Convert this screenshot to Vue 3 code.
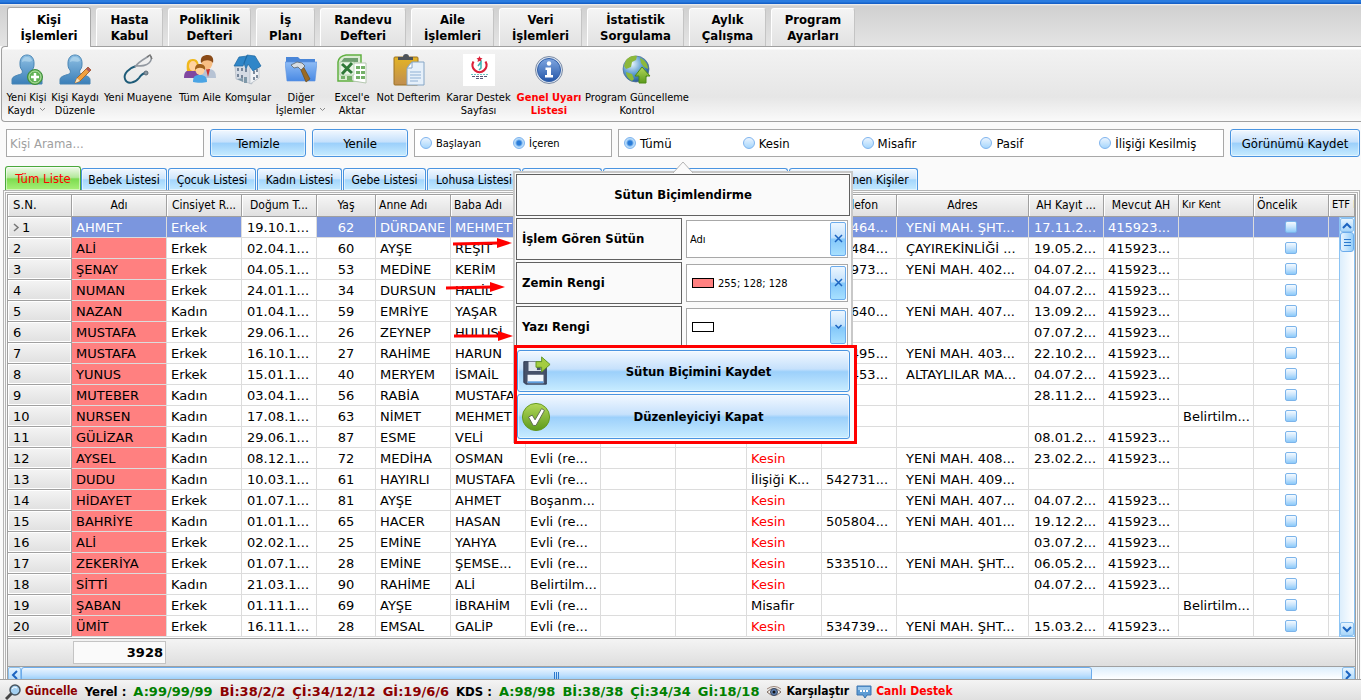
<script setup>
import { ref } from 'vue'

const mainTabs = [
  { lines: ['Kişi', 'İşlemleri'], w: 84 },
  { lines: ['Hasta', 'Kabul'], w: 67 },
  { lines: ['Poliklinik', 'Defteri'], w: 83 },
  { lines: ['İş', 'Planı'], w: 59 },
  { lines: ['Randevu', 'Defteri'], w: 86 },
  { lines: ['Aile', 'İşlemleri'], w: 83 },
  { lines: ['Veri', 'İşlemleri'], w: 83 },
  { lines: ['İstatistik', 'Sorgulama'], w: 97 },
  { lines: ['Aylık', 'Çalışma'], w: 77 },
  { lines: ['Program', 'Ayarları'], w: 84 },
]

const tools = [
  { icon: 'add', lines: ['Yeni Kişi', 'Kaydı'], w: 45, drop: true },
  { icon: 'edit', lines: ['Kişi Kaydı', 'Düzenle'], w: 52 },
  { icon: 'steth', lines: ['Yeni Muayene'], w: 74 },
  { icon: 'family', lines: ['Tüm Aile'], w: 50 },
  { icon: 'house', lines: ['Komşular'], w: 46 },
  { icon: 'folder', lines: ['Diğer', 'İşlemler'], w: 60, drop: true },
  { icon: 'excel', lines: ["Excel'e", 'Aktar'], w: 42 },
  { icon: 'note', lines: ['Not Defterim'], w: 71 },
  { icon: 'health', lines: ['Karar Destek', 'Sayfası'], w: 69 },
  { icon: 'info', lines: ['Genel Uyarı', 'Listesi'], w: 72, hot: true },
  { icon: 'globe', lines: ['Program Güncelleme', 'Kontrol'], w: 104 },
]

const matchMode = ref('İçeren')
const status = ref('Tümü')
const columnName = ref('Adı')
const backColor = ref('255; 128; 128')

const listTabs = [
  { t: 'Tüm Liste', w: 76 },
  { t: 'Bebek Listesi', w: 86 },
  { t: 'Çocuk Listesi', w: 88 },
  { t: 'Kadın Listesi', w: 85 },
  { t: 'Gebe Listesi', w: 83 },
  { t: 'Lohusa Listesi', w: 94 },
  { t: '', w: 80 },
  { t: '', w: 185 },
  { t: 'Görüntülenen Kişiler', w: 129 },
]

const columns = [
  { t: 'S.N.', w: 64, left: true, number: true },
  { t: 'Adı', w: 95 },
  { t: 'Cinsiyet R...', w: 75 },
  { t: 'Doğum T...', w: 75 },
  { t: 'Yaş', w: 59 },
  { t: 'Anne Adı', w: 75, left: true },
  { t: 'Baba Adı', w: 75, left: true },
  { t: '', w: 75 },
  { t: '', w: 75 },
  { t: '', w: 71 },
  { t: '', w: 75 },
  { t: 'Telefon', w: 75 },
  { t: 'Adres', w: 132 },
  { t: 'AH Kayıt ...', w: 75 },
  { t: 'Mevcut AH', w: 75 },
  { t: 'Kır Kent', w: 75, left: true, small: true },
  { t: 'Öncelik', w: 75, left: true },
  { t: 'ETF I', w: 0, left: true, small: true },
]

const M = '415923...'
const B = 'Belirtilm...'
const people = [
  ['AHMET', 'Erkek', '19.10.1...', 62, 'DÜRDANE', 'MEHMET', '', '', '542464...', 'YENİ MAH. ŞHT...', '17.11.2...', M, ''],
  ['ALİ', 'Erkek', '02.04.1...', 60, 'AYŞE', 'REŞİT', '', '', '542484...', 'ÇAYIREKİNLİĞİ ...', '19.05.2...', M, ''],
  ['ŞENAY', 'Erkek', '04.05.1...', 53, 'MEDİNE', 'KERİM', '', '', '542973...', 'YENİ MAH. 402...', '04.07.2...', M, ''],
  ['NUMAN', 'Erkek', '24.01.1...', 34, 'DURSUN', 'HALİL', '', '', '', '', '04.07.2...', M, ''],
  ['NAZAN', 'Kadın', '01.04.1...', 59, 'EMRİYE', 'YAŞAR', '', '', '542640...', 'YENİ MAH. 407...', '13.09.2...', M, ''],
  ['MUSTAFA', 'Erkek', '29.06.1...', 26, 'ZEYNEP', 'HULUSİ', '', '', '', '', '07.07.2...', M, ''],
  ['MUSTAFA', 'Erkek', '16.10.1...', 27, 'RAHİME', 'HARUN', '', '', '542495...', 'YENİ MAH. 403...', '22.10.2...', M, ''],
  ['YUNUS', 'Erkek', '15.01.1...', 40, 'MERYEM', 'İSMAİL', '', '', '542453...', 'ALTAYLILAR MA...', '04.07.2...', M, ''],
  ['MUTEBER', 'Kadın', '03.04.1...', 56, 'RABİA', 'MUSTAFA', '', '', '', '', '28.11.2...', M, ''],
  ['NURSEN', 'Kadın', '17.08.1...', 63, 'NİMET', 'MEHMET', '', '', '', '', '', '', B],
  ['GÜLİZAR', 'Kadın', '29.06.1...', 87, 'ESME', 'VELİ', '', '', '', '', '08.01.2...', M, ''],
  ['AYSEL', 'Kadın', '08.12.1...', 72, 'MEDİHA', 'OSMAN', 'Evli (re...', 'Kesin', '', 'YENİ MAH. 408...', '23.02.2...', M, ''],
  ['DUDU', 'Kadın', '10.03.1...', 61, 'HAYIRLI', 'MUSTAFA', 'Evli (re...', 'İlişiği K...', '542731...', 'YENİ MAH. 409...', '', '', ''],
  ['HİDAYET', 'Erkek', '01.07.1...', 81, 'AYŞE', 'AHMET', 'Boşanm...', 'Kesin', '', 'YENİ MAH. 407...', '04.07.2...', M, ''],
  ['BAHRİYE', 'Kadın', '01.01.1...', 65, 'HACER', 'HASAN', 'Evli (re...', 'Kesin', '505804...', 'YENİ MAH. 401...', '19.12.2...', M, ''],
  ['ALİ', 'Erkek', '02.02.1...', 25, 'EMİNE', 'YAHYA', 'Evli (re...', 'Kesin', '', '', '03.07.2...', M, ''],
  ['ZEKERİYA', 'Erkek', '01.07.1...', 28, 'EMİNE', 'ŞEMSE...', 'Evli (re...', 'Kesin', '533510...', 'YENİ MAH. ŞHT...', '06.05.2...', M, ''],
  ['SİTTİ', 'Kadın', '21.03.1...', 90, 'RAHİME', 'ALİ', 'Belirtilm...', 'Kesin', '', '', '04.07.2...', M, ''],
  ['ŞABAN', 'Erkek', '01.11.1...', 69, 'AYŞE', 'İBRAHİM', 'Evli (re...', 'Misafir', '', '', '', '', B],
  ['ÜMİT', 'Erkek', '16.11.1...', 28, 'EMSAL', 'GALİP', 'Evli (re...', 'Kesin', '534739...', 'YENİ MAH. ŞHT...', '15.03.2...', M, ''],
]
</script>

<template>
  <div class="app">
    <div class="titlebar"></div>
    <nav class="main-tabs">
      <button v-for="(tab, i) in mainTabs" :key="i" :class="{ active: i === 0 }" :style="{ width: tab.w + 'px' }">
        <span v-for="l in tab.lines" :key="l">{{ l }}</span>
      </button>
    </nav>

    <div class="ribbon">
      <button v-for="tool in tools" :key="tool.icon" class="tool" :class="{ hot: tool.hot }" :style="{ width: tool.w + 'px' }">
        <svg class="tool-icon" viewBox="0 0 32 32" aria-hidden="true">
          <defs v-if="tool.icon === 'add'">
            <linearGradient id="person" x1="0" y1="0" x2="0" y2="1"><stop offset="0" stop-color="#8fc0e4" /><stop offset="1" stop-color="#3b7fb8" /></linearGradient>
            <linearGradient id="fold" x1="0" y1="0" x2="0" y2="1"><stop offset="0" stop-color="#8fbcf5" /><stop offset="1" stop-color="#4a8ae4" /></linearGradient>
            <radialGradient id="globe" cx=".35" cy=".3" r=".8"><stop offset="0" stop-color="#e6f4fc" /><stop offset=".5" stop-color="#5b9bd0" /><stop offset="1" stop-color="#1c4c86" /></radialGradient>
            <linearGradient id="info" x1="0" y1="0" x2="0" y2="1"><stop offset="0" stop-color="#7fa6e0" /><stop offset="1" stop-color="#2456a8" /></linearGradient>
            <linearGradient id="green" x1="0" y1="0" x2="0" y2="1"><stop offset="0" stop-color="#b4d85a" /><stop offset="1" stop-color="#5c9a1c" /></linearGradient>
            <linearGradient id="board" x1="0" y1="0" x2="0" y2="1"><stop offset="0" stop-color="#e4b424" /><stop offset="1" stop-color="#c08e50" /></linearGradient>
          </defs>
          <g v-if="tool.icon === 'add' || tool.icon === 'edit'">
            <path d="M1 30v-4c0-3 3-4 6-5 4-1 5-2 4-5-2-2-2-4-2-7 0-5 3-8 7-8s7 3 7 8c0 3 0 5-2 7-1 3 0 4 4 5 3 1 6 2 6 5v4z" fill="url(#person)" stroke="#4784b4" />
            <path d="M11 8c0-3 2-5 5-5s5 2 5 4c-3 2-7-1-10 1z" fill="#b4d8ee" opacity=".7" />
            <g v-if="tool.icon === 'add'">
              <circle cx="24" cy="23" r="7.5" fill="#62b256" stroke="#3d8c3b" />
              <circle cx="24" cy="23" r="6" fill="none" stroke="#b5e0a5" />
              <path d="M24 19v8M20 23h8" stroke="#fff" stroke-width="2.5" />
            </g>
            <g v-else>
              <path d="M18 24 29 13l3 3-11 11-5 2z" fill="#f0a040" stroke="#a86a2c" />
              <path d="m27 15 2-2 3 3-2 2z" fill="#b05a5a" />
              <path d="m18 24 3 3-5 2z" fill="#f6e2bc" />
            </g>
          </g>
          <g v-else-if="tool.icon === 'steth'" fill="none">
            <path d="M14 12C7 14 1 20 3 25c2 6 10 4 14-1 2-3 4-5 7-5" stroke="#1d5b78" stroke-width="2" />
            <path d="M13 13C16 8 22 5 27 2M14 12c6 0 10 0 13-3 2-2 3-4 2-7" stroke="#9298a0" stroke-width="1.6" />
            <path d="M25 3l3-2 2 4" stroke="#777" stroke-width="1.4" />
            <circle cx="24" cy="19" r="2" fill="#8796a2" stroke="#5c6c78" />
          </g>
          <g v-else-if="tool.icon === 'family'">
            <path d="M0 24c0-6 2-8 8-8s8 3 8 8z" fill="#8048a0" />
            <path d="M3 17c-1-8 0-12 6-12s6 6 6 12z" fill="#f0b81c" />
            <ellipse cx="9" cy="12" rx="4" ry="5" fill="#ffd2a0" />
            <path d="M15 24c0-7 3-9 9-9s8 3 8 9z" fill="#b7c3d4" />
            <path d="M22 15h4l-2 8z" fill="#c83434" />
            <ellipse cx="23" cy="9" rx="5.5" ry="6.5" fill="#f7be84" />
            <path d="M17 9c-1-6 2-8 7-8 4 0 6 3 5 8-2-3-8-4-12 0z" fill="#8a4b18" />
            <path d="M9 28c0-6 2-7 7-7s7 2 7 7c-3 1-11 1-14 0z" fill="#4aa4e4" />
            <ellipse cx="16" cy="16" rx="4.5" ry="5" fill="#ffd2a0" />
            <path d="M11 16c0-5 2-6 5-6s6 2 5 6c-3-3-7-3-10 0z" fill="#a0601c" />
          </g>
          <g v-else-if="tool.icon === 'house'">
            <path d="M3 12l8-5 9 3v20L4 25z" fill="#d5dbe4" stroke="#a9b1bc" stroke-width=".6" />
            <path d="M18 13l9 0v11l-9 6z" fill="#f0f2f5" stroke="#a9b1bc" stroke-width=".6" />
            <path d="M2 12 7 3l8-1-4 10zM12 9l3-8 8 1 6 10-8 5-5-7-2 5z" fill="#2f86c8" stroke="#1b659f" stroke-width=".7" />
            <path d="M6 14v3M10 14v3M6 20v3M10 21v3M14 15v3M22 17v3M25 15v3M22 23v3M25 21v3" stroke="#566a80" stroke-width="1.5" />
            <path d="M5 25l6-1v4zM12 23h3v6h-3z" fill="#7f98a8" />
          </g>
          <g v-else-if="tool.icon === 'folder'">
            <path d="M1 3h12l2 2h15v6H1z" fill="#4a86d8" />
            <path d="M0 8h32l-2 19H2z" fill="url(#fold)" stroke="#5a92e0" stroke-width=".6" />
            <path d="m15 14 3-2 7 13-4 3z" fill="#9a6a24" stroke="#64430f" stroke-width=".6" />
            <path d="M6 11l6-3 5 1 3 3-4 4-3-3-4 1z" fill="#d8dde2" stroke="#59636c" stroke-width=".8" />
          </g>
          <g v-else-if="tool.icon === 'excel'">
            <path d="M2 8Q3 2 10 1h15v26H2z" fill="#dcecd4" stroke="#60b040" stroke-width="1.5" />
            <path d="M8 4h14v4H5z" fill="#6f9f70" />
            <path d="M17 9h13v20l-13-2z" fill="#fff" stroke="#b5c8b0" />
            <path d="M20 12h4v3h-4zM25 12h4v3h-4zM20 17h4v3h-4zM25 17h4v3h-4zM20 22h4v3h-4zM25 22h4v3h-4zM5 22h4v3H5zM11 22h5v4h-5z" fill="#74b068" />
            <path d="M4 8h14v13H4z" fill="#eaf5e6" stroke="#9cc494" stroke-width=".6" />
            <path d="m6 10 10 9M16 9 6 20" stroke="#307a38" stroke-width="3" />
          </g>
          <g v-else-if="tool.icon === 'note'">
            <rect x="1" y="3" width="24" height="28" rx="1" fill="url(#board)" stroke="#9c7222" />
            <path d="M5 5V3h5q0-3 3-3t3 3h4v3H5z" fill="#4c5258" />
            <path d="M14 14 19 8h12v23H14z" fill="#e6f0fa" stroke="#86a6c6" />
            <path d="M19 8v6h-5z" fill="#fff" stroke="#86a6c6" />
            <path d="M17 18h11M17 21h11M17 24h11M17 27h8" stroke="#8fb0d4" />
          </g>
          <g v-else-if="tool.icon === 'health'">
            <path d="M0 0h32v32H0z" fill="#fff" />
            <path d="M11 7a7.5 7.5 0 1 0 11 0c4 8-15 8-11 0z" fill="none" stroke="none" />
            <path d="M10.500 7.500a7 7 0 1 0 12 0" fill="none" stroke="#dc2038" stroke-width="2.200" />
            <path d="m16.500 2 1 2 2 .3-1.500 1.500.4 2.200-1.900-1-2 1 .5-2.200L13.500 4.300l2-.3z" fill="#dc2038" />
            <path d="M15 12l3-4v6l-2 2" stroke="#3cb4b4" stroke-width="1.500" fill="none" />
            <path d="M8 20.500h17" stroke="#70c4c4" stroke-dasharray="2 1" />
            <path d="M9 22.500h15M13 24.500h7" stroke="#585878" stroke-dasharray="3 1" />
          </g>
          <g v-else-if="tool.icon === 'info'">
            <circle cx="16" cy="16" r="13.500" fill="#dce5f2" stroke="#7b8ba4" />
            <circle cx="16" cy="16" r="11.500" fill="url(#info)" stroke="#315fa8" />
            <circle cx="16" cy="9.500" r="2.200" fill="#fff" />
            <path d="M12.500 13.500h5.500v7.500h2v2.500h-8V21h2v-5h-1.500z" fill="#fff" />
          </g>
          <g v-else>
            <circle cx="15" cy="15" r="13" fill="url(#globe)" stroke="#4d6f90" stroke-width=".7" />
            <path d="M5 6c3-4 8-5 11-4l-1 4-4 2-1 5-5 2-2-3zM19 4c5 2 8 6 8 11l-4-2-3-4zM5 18l6 2 2 5-2 2c-4-2-6-5-6-9z" fill="#8cb83c" />
            <path d="m21 13 8 9h-4v7h-7v-7h-4z" fill="url(#green)" stroke="#4e8c14" />
          </g>
        </svg>
        <span v-for="(l, i) in tool.lines" :key="l">{{ l }}<svg v-if="tool.drop && i === 1" class="mini" viewBox="0 0 7 5" aria-hidden="true"><path d="M1 1l2.500 2.500L6 1" fill="none" stroke="#888" /></svg></span>
      </button>
    </div>

    <div class="filters">
      <input class="search" type="text" placeholder="Kişi Arama..." aria-label="Kişi Arama" />
      <button class="blue clear">Temizle</button>
      <button class="blue clear">Yenile</button>
      <div class="radios two">
        <label v-for="o in ['Başlayan', 'İçeren']" :key="o"><input v-model="matchMode" type="radio" name="match" :value="o" />{{ o }}</label>
      </div>
      <div class="radios five">
        <label v-for="o in ['Tümü', 'Kesin', 'Misafir', 'Pasif', 'İlişiği Kesilmiş']" :key="o"><input v-model="status" type="radio" name="status" :value="o" />{{ o }}</label>
      </div>
      <button class="blue save-view">Görünümü Kaydet</button>
    </div>

    <nav class="list-tabs">
      <button v-for="(tab, i) in listTabs" :key="i" :class="{ active: i === 0 }" :style="{ width: tab.w + 'px' }">{{ tab.t }}</button>
    </nav>

    <main class="panel">
      <div class="grid">
        <div class="rows">
          <table>
            <colgroup>
              <col v-for="(c, i) in columns" :key="i" :style="c.w ? { width: c.w + 'px' } : {}" />
            </colgroup>
            <thead>
              <tr>
                <th v-for="(c, i) in columns" :key="i" :class="{ left: c.left, small: c.small, number: c.number }">{{ c.t }}</th>
              </tr>
            </thead>
            <tbody>
              <tr v-for="(p, i) in people" :key="i" :class="{ selected: i === 0 }">
                <td class="sn"><svg v-if="i === 0" class="pointer" viewBox="0 0 7 9" aria-hidden="true"><path d="M1 1l4 3.500L1 8" fill="none" stroke="#777" stroke-width="1.500" /></svg>{{ i + 1 }}</td>
                <td class="name">{{ p[0] }}</td>
                <td>{{ p[1] }}</td>
                <td class="birth">{{ p[2] }}</td>
                <td class="age">{{ p[3] }}</td>
                <td>{{ p[4] }}</td>
                <td>{{ p[5] }}</td>
                <td>{{ p[6] }}</td>
                <td></td>
                <td></td>
                <td :class="{ certain: p[7] === 'Kesin' }">{{ p[7] }}</td>
                <td>{{ p[8] }}</td>
                <td class="address">{{ p[9] }}</td>
                <td class="date">{{ p[10] }}</td>
                <td>{{ p[11] }}</td>
                <td>{{ p[12] }}</td>
                <td class="check"><input type="checkbox" :aria-label="'Öncelik ' + (i + 1)" /></td>
                <td></td>
              </tr>
            </tbody>
          </table>
          <div class="vscroll">
            <button aria-label="Yukarı"><svg viewBox="0 0 10 7"><path d="M1 6l4-4 4 4" /></svg></button>
            <div class="vthumb"></div>
            <div class="vtrack"></div>
            <button aria-label="Aşağı"><svg viewBox="0 0 10 7"><path d="M1 1l4 4 4-4" /></svg></button>
          </div>
        </div>
        <div class="summary"><output>3928</output></div>
        <div class="hscroll">
          <button aria-label="Sola"><svg viewBox="0 0 7 10"><path d="M6 1L2 5l4 4" /></svg></button>
          <div class="hthumb"><i></i></div>
          <div class="htrack"></div>
          <button aria-label="Sağa"><svg viewBox="0 0 7 10"><path d="M1 1l4 4-4 4" /></svg></button>
        </div>
      </div>
    </main>

    <footer class="status">
      <svg viewBox="0 0 16 16" aria-hidden="true"><path d="M1 15l6-6" stroke="#444" stroke-width="3" /><circle cx="10" cy="6" r="5" fill="#a4d0f0" stroke="#48545e" stroke-width="1.500" /><path d="M7 5q2-3 5-1" stroke="#fff" fill="none" /></svg>
      <a href="#" class="dark first">Güncelle</a>
      <span class="source">Yerel :</span>
      <span class="ok count">A:99/99/99</span>
      <span class="dark count">Bİ:38/2/2</span>
      <span class="dark count">Çİ:34/12/12</span>
      <span class="dark count">Gİ:19/6/6</span>
      <span class="source">KDS :</span>
      <span class="ok count">A:98/98</span>
      <span class="ok count">Bİ:38/38</span>
      <span class="ok count">Çİ:34/34</span>
      <span class="ok count">Gİ:18/18</span>
      <svg viewBox="0 0 16 16" aria-hidden="true"><path d="M1 8q7-7 14 0-7 7-14 0z" fill="#f5efe8" stroke="#7c6a60" /><circle cx="8" cy="8" r="3.500" fill="#6080b0" stroke="#3a4860" /><circle cx="8" cy="8" r="1.500" fill="#111" /><path d="M1 5q7-5 14 0" fill="none" stroke="#9a8478" /></svg>
      <a href="#" class="first">Karşılaştır</a>
      <svg viewBox="0 0 16 16" aria-hidden="true"><path d="M1 2h14v9h-4l-2 3-2-3H1z" fill="#5e9cd4" stroke="#3a74b0" /><path d="M2 3h12v3H2z" fill="#9cc8ec" /><path d="M4 7h2M7 7h2M10 7h2" stroke="#fff" stroke-width="2" /></svg>
      <a href="#" class="live first">Canlı Destek</a>
    </footer>

    <section class="popup">
      <svg class="tip" viewBox="0 0 20 12" aria-hidden="true"><path d="M0 12L10 1l10 11z" fill="#fafafa" /><path d="M0 12L10 1l10 11" fill="none" stroke="#b4b4b4" /></svg>
      <h2>Sütun Biçimlendirme</h2>
      <div class="field">
        <label for="col">İşlem Gören Sütün</label>
        <div class="editor">
          <input id="col" v-model="columnName" type="text" />
          <button aria-label="Sütunu temizle"><svg viewBox="0 0 9 9"><path d="M1 1l7 7M8 1L1 8" /></svg></button>
        </div>
      </div>
      <div class="field">
        <label for="back">Zemin Rengi</label>
        <div class="editor">
          <i class="swatch pink"></i>
          <input id="back" v-model="backColor" type="text" />
          <button aria-label="Zemin rengini temizle"><svg viewBox="0 0 9 9"><path d="M1 1l7 7M8 1L1 8" /></svg></button>
        </div>
      </div>
      <div class="field">
        <label for="fore">Yazı Rengi</label>
        <div class="editor">
          <i class="swatch"></i>
          <input id="fore" type="text" />
          <button class="drop" aria-label="Yazı rengi seç"><svg viewBox="0 0 9 9"><path d="M1.500 3l3 3 3-3" stroke-width="2" /></svg></button>
        </div>
      </div>
      <div class="actions">
        <button class="blue">
          <svg viewBox="0 0 32 32" aria-hidden="true">
            <path d="M3 6h24v24H5l-2-2z" fill="#46526a" stroke="#2c3650" />
            <path d="M8 6h14v10H8z" fill="#dce4ee" /><path d="M17 7h4v8h-4z" fill="#46526a" />
            <path d="M7 20h17v9H7z" fill="#f4f8fc" /><path d="M7 27h17v2H7z" fill="#5c9cdc" />
            <path d="M16 6h6V1l9 8-9 8v-5h-6z" fill="#a4cc40" stroke="#5e9420" />
          </svg>
          <span>Sütun Biçimini Kaydet</span>
        </button>
        <button class="blue tall">
          <svg viewBox="0 0 32 32" aria-hidden="true">
            <circle cx="16" cy="16" r="14.500" fill="url(#green)" stroke="#62961c" />
            <path d="M8 16l4-2 3 5 7-12 3 2-9 16h-3z" fill="#fff" stroke="#5c6a50" />
          </svg>
          <span>Düzenleyiciyi Kapat</span>
        </button>
      </div>
      <svg class="arrow a1" viewBox="0 0 60 12" aria-hidden="true"><path d="M1 7l46-1" stroke="#f00" stroke-width="3" /><path d="M45 1l15 5-15 5z" fill="#f00" /></svg>
      <svg class="arrow a2" viewBox="0 0 60 12" aria-hidden="true"><path d="M1 7l46-1" stroke="#f00" stroke-width="3" /><path d="M45 1l15 5-15 5z" fill="#f00" /></svg>
      <svg class="arrow a3" viewBox="0 0 60 12" aria-hidden="true"><path d="M1 6h46" stroke="#f00" stroke-width="3" /><path d="M45 1l15 5-15 5z" fill="#f00" /></svg>
    </section>
  </div>
</template>

<style>
body { background: #fafafa; }
</style>

<style scoped>
.app {
  position: relative;
  font-family: "DejaVu Sans Condensed", "DejaVu Sans", sans-serif;
  font-stretch: condensed;
  font-size: 12px;
  color: #000;
  overflow: hidden;
}
.app * { box-sizing: border-box; }
button, input { font: inherit; color: inherit; margin: 0; padding: 0; }
button { border: 0; background: none; white-space: nowrap; }
a { color: inherit; text-decoration: none; }

.titlebar { height: 4px; background: linear-gradient(#2a7ce0, #2a7ce0 2px, #1661c8 3px); }
.main-tabs {
  display: flex;
  align-items: flex-end;
  gap: 5px;
  height: 42px;
  padding: 0 7px;
  background: linear-gradient(#f4f4f4, #d0d0d0 2px, #e4e4e4);
}
.main-tabs button {
  display: flex;
  flex: none;
  flex-direction: column;
  align-items: center;
  height: 38px;
  padding-top: 3px;
  border: 1px solid #c4c4c4;
  border-top-color: #fff;
  border-left-color: #fff;
  border-bottom: 0;
  border-radius: 3px 3px 0 0;
  background: linear-gradient(#f4f4f4, #e2e2e2);
  font-weight: bold;
  font-size: 13px;
  line-height: 16px;
}
.main-tabs button.active {
  position: relative;
  z-index: 1;
  height: 40px;
  margin-bottom: -1px;
  padding-top: 4px;
  border-color: #a8a8a8;
  background: #fff;
}
.ribbon {
  display: flex;
  height: 76px;
  margin-left: 1px;
  padding: 7px 2px 0;
  border: 1px solid #a0a0a0;
  border-right: 0;
  border-radius: 4px 0 0 4px;
  background: linear-gradient(#fff, #fff 2px, #f2f2f2 3px, #e6e6e6 50px, #fafafa);
}
.tool {
  display: flex;
  flex: none;
  flex-direction: column;
  align-items: center;
  font-size: 11px;
  line-height: 13px;
}
.tool-icon { width: 32px; height: 32px; margin-bottom: 5px; }
.tool.hot { color: #f00; font-weight: bold; }
.mini { width: 7px; height: 5px; margin-left: 4px; vertical-align: 2px; }

.blue {
  border: 1px solid #4a94e0;
  border-radius: 3px;
  background: linear-gradient(#f2f8ff, #c6e1fc 45%, #9cd0fb 52%, #c8ecff);
  box-shadow: inset 0 0 0 1px rgba(255, 255, 255, .5);
}
.filters { display: flex; gap: 6px; height: 28px; margin: 7px 1px 9px 6px; font-size: 13px; }
.filters .search { width: 198px; padding: 0 3px; border: 1px solid #a8a8a8; background: #fff; }
.search::placeholder { color: #a0a0a0; opacity: 1; }
.filters .clear { width: 96px; }
.filters .save-view { width: 130px; flex: none; }
.radios { display: grid; align-items: center; padding: 0 5px; border: 1px solid #a8a8a8; background: #fff; }
.radios.two { width: 198px; grid-template-columns: 1fr 1fr; font-size: 11px; }
.radios.five { flex: 1; grid-template-columns: repeat(5, 1fr); }
.radios label { display: flex; align-items: center; gap: 4px; white-space: nowrap; }
.radios input {
  appearance: none;
  width: 12px;
  height: 12px;
  border: 1px solid #7fb4ee;
  border-radius: 50%;
  background: linear-gradient(#eaf4ff, #a6d6fc);
}
.radios input:checked { background: radial-gradient(circle, #2a7cd8 2px, #b8dcfb 4px); }

.list-tabs { display: flex; align-items: flex-end; gap: 1px; height: 24px; padding-left: 5px; }
.list-tabs button {
  flex: none;
  height: 22px;
  padding: 0 5px;
  border: 1px solid #4a94e0;
  border-bottom: 0;
  border-radius: 3px 3px 0 0;
  background: linear-gradient(#f2f8ff, #cfe6fc 45%, #a4d6fc 52%, #c4eaff);
  box-shadow: inset 0 0 0 1px rgba(255, 255, 255, .5);
}
.list-tabs button.active {
  height: 24px;
  margin-right: -1px;
  border-color: #4aa83c;
  background: linear-gradient(#f0faea, #b4e89c 45%, #7cdc50 52%, #a8f078);
  color: #f00;
  font-size: 13px;
}

.panel { margin: 0 1px 0 3px; padding: 1px 1px 0; border: 3px double #b4b4b4; border-bottom: 0; }
.grid { border: 1px solid #a0a0a0; border-bottom: 0; background: #fff; }
.rows { position: relative; height: 443px; overflow: hidden; }
table {
  width: 100%;
  table-layout: fixed;
  border-collapse: separate;
  border-spacing: 0;
  font-size: 13px;
  font-family: "DejaVu Sans", sans-serif;
  font-stretch: normal;
}
th {
  height: 22px;
  padding: 0 3px 2px;
  border-right: 1px solid #a0a0a0;
  border-bottom: 1px solid #a0a0a0;
  background: linear-gradient(#f6f6f6, #e0e0e0);
  box-shadow: inset 1px 1px 0 #fff;
  font-family: "DejaVu Sans Condensed", "DejaVu Sans", sans-serif;
  font-stretch: condensed;
  font-weight: normal;
  font-size: 12px;
  line-height: 18px;
  white-space: nowrap;
  overflow: hidden;
}
th.left { text-align: left; }
th.small { font-size: 11px; }
th.number { padding-left: 5px; font-size: 13px; }
td {
  height: 21px;
  padding: 2px 0 0 4px;
  border-right: 1px solid #dcdcdc;
  border-bottom: 1px solid #dcdcdc;
  line-height: 18px;
  white-space: nowrap;
  overflow: hidden;
}
td.sn {
  padding-left: 5px;
  border-color: #a0a0a0;
  background: linear-gradient(#f4f4f4, #e0e0e0);
  box-shadow: inset 1px 1px 0 #fff, inset -1px -1px 0 #fff;
}
td.name { background: #ff8080; }
td.age { padding-left: 0; text-align: center; }
td.address { padding-left: 9px; }
td.date, td.birth { padding-left: 5px; }
td.certain { color: #f00; }
td.check { padding: 0; text-align: center; line-height: 0; }
.check input {
  appearance: none;
  width: 12px;
  height: 12px;
  border: 1px solid #7cb4ea;
  border-radius: 2px;
  background: linear-gradient(#f4faff, #c8e4fc 50%, #8ccafa);
}
.selected td:not(.sn):not(.birth) { background: #7b96de; color: #fff; }
.pointer { width: 7px; height: 9px; margin-right: 2px; }

.vscroll {
  position: absolute;
  display: flex;
  flex-direction: column;
  top: 22px;
  right: 0;
  bottom: 1px;
  width: 16px;
  border: 1px solid #8cc4f4;
  background: linear-gradient(90deg, #dceefc, #fff);
}
.vscroll button, .hscroll button {
  display: flex;
  align-items: center;
  justify-content: center;
  border: 1px solid #8cc0ee;
  border-radius: 2px;
  background: linear-gradient(#e6f4ff, #a8d6fa);
}
.vscroll button { height: 14px; }
.vscroll svg { width: 10px; height: 7px; }
.vscroll path, .hscroll path { fill: none; stroke: #1c64c0; stroke-width: 2; }
.vthumb {
  height: 20px;
  border: 1px solid #6cacec;
  border-radius: 3px;
  background: linear-gradient(#2c78cc, #2c78cc) 3px 6px / 7px 1px no-repeat,
    linear-gradient(#2c78cc, #2c78cc) 3px 9px / 7px 1px no-repeat,
    linear-gradient(#2c78cc, #2c78cc) 3px 12px / 7px 1px no-repeat,
    linear-gradient(90deg, #e8f4ff, #94cefa);
}
.vtrack { flex: 1; }
.summary {
  height: 29px;
  padding: 2px 0 3px 65px;
  border-top: 1px solid #a0a0a0;
  border-bottom: 1px solid #a0a0a0;
  background: linear-gradient(#f4f4f4, #dedede);
}
.summary output {
  display: block;
  width: 93px;
  height: 23px;
  padding: 0 2px;
  border: 1px solid #c4c4c4;
  background: #fafafa;
  font-family: "DejaVu Sans", sans-serif;
  font-stretch: normal;
  font-weight: bold;
  font-size: 13px;
  line-height: 21px;
  text-align: right;
}
.hscroll { display: flex; height: 12px; overflow: hidden; background: linear-gradient(#dceefc, #fff); }
.hscroll button { width: 13px; height: 16px; flex: none; }
.hscroll svg { width: 7px; height: 10px; }
.hthumb {
  display: flex;
  flex: 107;
  justify-content: center;
  height: 16px;
  padding-top: 4px;
  border: 1px solid #6cacec;
  border-radius: 3px;
  background: linear-gradient(#eaf5ff, #c0e0fc 50%, #80c4f8);
}
.hthumb i { width: 5px; height: 8px; border: 1px solid #2c78cc; border-width: 0 1px; background: linear-gradient(90deg, transparent 1px, #2c78cc 1px, #2c78cc 2px, transparent 2px); }
.htrack { flex: 25; }

.status {
  position: relative;
  display: flex;
  align-items: center;
  gap: 7px;
  height: 21px;
  padding: 3px 5px 0;
  border-top: 1px solid #a0a0a0;
  background: linear-gradient(#f4f4f4, #e0e0e0);
  font-weight: bold;
  font-size: 12px;
  line-height: 17px;
  white-space: nowrap;
}
.status svg { width: 16px; height: 16px; flex: none; }
.status .first { margin-left: -3px; }
.status .source { font-size: 13px; }
.status .count { font-family: "DejaVu Sans", sans-serif; font-stretch: normal; font-size: 13px; }
.dark { color: #8b0000; }
.ok { color: #008000; }
.live { color: #f00; }

.popup {
  position: absolute;
  left: 513px;
  top: 171px;
  display: flex;
  flex-direction: column;
  gap: 2px;
  width: 340px;
  padding: 1px 1px 0;
  border: 2px solid #c8c8c8;
  background: #fafafa;
}
.popup h2 {
  height: 42px;
  margin: 0;
  border: 1px solid #606060;
  font-size: 13px;
  line-height: 40px;
  text-align: center;
}
.tip { position: absolute; left: 158px; top: -12px; width: 20px; height: 12px; }
.field { display: grid; grid-template-columns: 166px minmax(0, 1fr); gap: 4px; align-items: center; padding-right: 2px; }
.field label {
  height: 42px;
  padding-left: 5px;
  border: 1px solid #606060;
  font-weight: bold;
  font-size: 13px;
  line-height: 40px;
}
.editor {
  display: flex;
  align-items: center;
  height: 38px;
  padding: 1px 1px 1px 3px;
  border: 1px solid #a8a8a8;
  background: #fff;
  font-size: 11px;
}
.editor input { flex: 1; width: 0; min-width: 0; height: 34px; border: 0; outline: 0; background: none; }
.editor button {
  flex: none;
  width: 16px;
  height: 34px;
  border: 1px solid #6cacec;
  border-radius: 2px;
  background: linear-gradient(#ecf6ff, #c4e2fc 45%, #84c8fa 52%, #a8e0ff);
}
.editor button svg { width: 9px; height: 9px; }
.editor path { fill: none; stroke: #1c64c0; stroke-width: 1.5; }
.swatch { flex: none; width: 22px; height: 10px; margin: 0 4px 0 2px; border: 1px solid #000; }
.swatch.pink { background: #ff8080; }
.actions {
  position: relative;
  z-index: 1;
  display: flex;
  flex-direction: column;
  gap: 2px;
  margin: -5px -7px -3px -2px;
  padding: 2px 4px 2px 0;
  border: 3px solid #f00;
  background: #fafafa;
}
.actions button { display: flex; align-items: center; height: 42px; padding: 0 3px; font-weight: bold; font-size: 13px; }
.actions .tall { height: 45px; }
.actions svg { width: 30px; height: 30px; }
.actions span { flex: 1; text-align: center; }
.arrow { position: absolute; width: 60px; height: 12px; }
.a1 { left: -63px; top: 64px; }
.a2 { left: -70px; top: 108px; }
.a3 { left: -62px; top: 157px; }
</style>
